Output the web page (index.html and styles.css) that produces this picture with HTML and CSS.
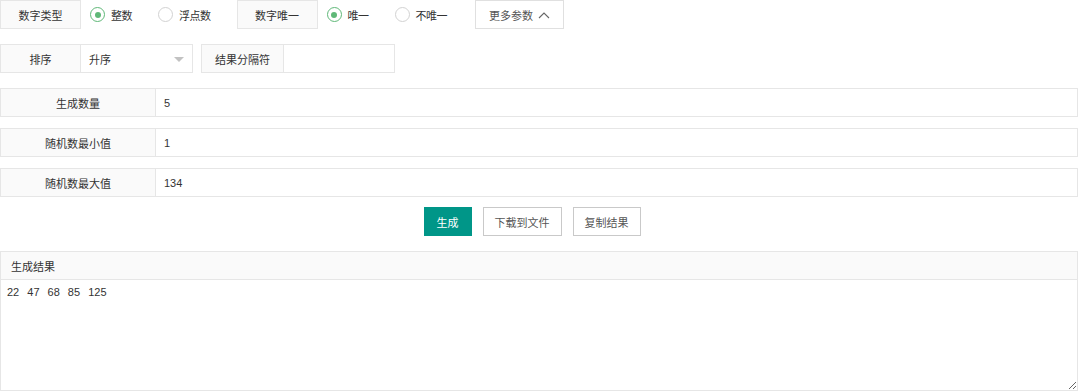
FILE: index.html
```html
<!DOCTYPE html>
<html lang="zh-CN">
<head>
    <meta charset="UTF-8">
    <title>随机数生成</title>
    <link rel="stylesheet" href="styles.css">
</head>
<body>
    <div class="page">
        <div class="row row-top">
            <div class="label">数字类型</div>
            <div class="radios">
                <span class="radio checked"><i></i>整数</span>
                <span class="radio"><i></i>浮点数</span>
            </div>
            <div class="label">数字唯一</div>
            <div class="radios">
                <span class="radio checked"><i></i>唯一</span>
                <span class="radio"><i></i>不唯一</span>
            </div>
            <button class="btn btn-more">更多参数
                <svg width="12" height="8" viewBox="0 0 12 8"><path d="M1 7 L6 2 L11 7" fill="none" stroke="#666" stroke-width="1.1"/></svg>
            </button>
        </div>

        <div class="row row-second">
            <div class="group">
                <div class="label">排序</div>
                <div class="select">升序<span class="caret"></span></div>
            </div>
            <div class="group">
                <div class="label label-sep">结果分隔符</div>
                <div class="input input-sep"></div>
            </div>
        </div>

        <div class="field">
            <div class="field-label">生成数量</div>
            <div class="field-input">5</div>
        </div>
        <div class="field">
            <div class="field-label">随机数最小值</div>
            <div class="field-input">1</div>
        </div>
        <div class="field">
            <div class="field-label">随机数最大值</div>
            <div class="field-input">134</div>
        </div>

        <div class="actions">
            <button class="btn btn-primary">生成</button>
            <button class="btn">下载到文件</button>
            <button class="btn">复制结果</button>
        </div>

        <div class="result">
            <div class="result-head">生成结果</div>
            <textarea class="result-body">22 47 68 85 125</textarea>
        </div>
    </div>
</body>
</html>
```

FILE: styles.css
```css
body {
    margin: 0;
    font-family: "Liberation Sans", "Noto Sans CJK SC", sans-serif;
    font-size: 11px;
    color: #333;
    background: #fff;
}

.page {
    width: 1078px;
}

.row {
    display: flex;
    align-items: center;
    height: 29px;
}

.row-top {
    margin-bottom: 15px;
}

.row-second {
    gap: 8px;
    margin-bottom: 15px;
}

.label {
    box-sizing: border-box;
    height: 29px;
    width: 81px;
    display: flex;
    align-items: center;
    justify-content: center;
    background: #fafafa;
    border: 1px solid #e6e6e6;
}

.label-sep {
    width: 83px;
}

.radios {
    display: flex;
    align-items: center;
    padding-left: 9px;
}

.radio {
    display: flex;
    align-items: center;
    margin-right: 26px;
    letter-spacing: -0.5px;
}

.radio i {
    box-sizing: border-box;
    width: 15px;
    height: 15px;
    border: 1px solid #d2d2d2;
    border-radius: 50%;
    margin-right: 6px;
    display: flex;
    align-items: center;
    justify-content: center;
}

.radio.checked i {
    border-color: #5fb878;
}

.radio.checked i::after {
    content: "";
    width: 6px;
    height: 6px;
    border-radius: 50%;
    background: #5fb878;
}

.btn {
    box-sizing: border-box;
    height: 29px;
    padding: 0 11px;
    border: 1px solid #c9c9c9;
    background: #fff;
    color: #555;
    font-family: inherit;
    font-size: 11px;
    cursor: pointer;
}

.btn-more {
    width: 89px;
    margin-left: 2px;
    display: flex;
    align-items: center;
    gap: 5px;
    padding: 0 13px;
    border-color: #e0e0e0;
}

.group {
    display: flex;
}

.select {
    box-sizing: border-box;
    position: relative;
    width: 112px;
    height: 29px;
    border: 1px solid #e6e6e6;
    border-left: none;
    padding-left: 8px;
    display: flex;
    align-items: center;
}

.caret {
    position: absolute;
    right: 8px;
    top: 12px;
    border: 5px solid transparent;
    border-top: 5px solid #c2c2c2;
    border-bottom: none;
}

.input {
    box-sizing: border-box;
    height: 29px;
    border: 1px solid #e6e6e6;
    border-left: none;
}

.input-sep {
    width: 111px;
}

.field {
    display: flex;
    height: 29px;
    margin-bottom: 11px;
}

.field-label {
    box-sizing: border-box;
    width: 156px;
    display: flex;
    align-items: center;
    justify-content: center;
    background: #fafafa;
    border: 1px solid #e6e6e6;
}

.field-input {
    box-sizing: border-box;
    flex: 1;
    display: flex;
    align-items: center;
    padding-left: 8px;
    border: 1px solid #e6e6e6;
    border-left: none;
}

.actions {
    display: flex;
    justify-content: center;
    gap: 11px;
    padding-right: 14px;
    margin-top: -1px;
    margin-bottom: 15px;
}

.btn-primary {
    background: #009688;
    border-color: #009688;
    color: #fff;
    width: 48px;
    padding: 0;
}

.result {
    display: flex;
    flex-direction: column;
}

.result-head {
    box-sizing: border-box;
    height: 29px;
    padding-left: 10px;
    display: flex;
    align-items: center;
    background: #fafafa;
    border: 1px solid #e6e6e6;
}

.result-body {
    box-sizing: border-box;
    height: 111px;
    margin: 0;
    padding: 5px 6px;
    border: 1px solid #e6e6e6;
    border-top: none;
    font-family: inherit;
    font-size: 11px;
    line-height: 14px;
    word-spacing: 5px;
    color: #333;
    outline: none;
}
```
